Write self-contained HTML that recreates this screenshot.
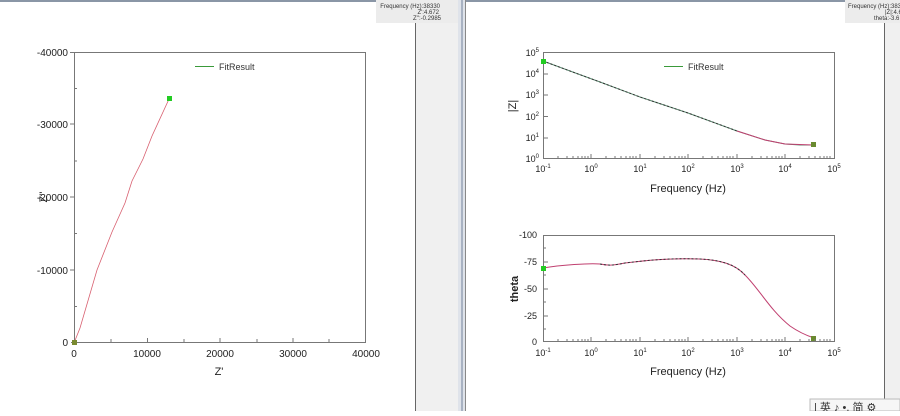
<!DOCTYPE html>
<html><head><meta charset="utf-8"><style>
body{margin:0;width:900px;height:411px;overflow:hidden;background:#fff;font-family:"Liberation Sans",sans-serif;}
</style></head><body>
<svg width="900" height="411" xmlns="http://www.w3.org/2000/svg" font-family="Liberation Sans, sans-serif">
<rect width="900" height="411" fill="#fff"/>
<rect x="0" y="0" width="900" height="2" fill="#8a96a6"/>
<rect x="415" y="2" width="43" height="409" fill="#f0f0f0"/>
<line x1="415.5" y1="2" x2="415.5" y2="411" stroke="#666"/>
<rect x="458" y="0" width="8" height="411" fill="#dfe3ea"/>
<rect x="461" y="0" width="2" height="411" fill="#a8b2c2"/>
<line x1="465.5" y1="0" x2="465.5" y2="411" stroke="#888"/>
<rect x="884" y="2" width="16" height="409" fill="#f0f0f0"/>
<line x1="884.5" y1="2" x2="884.5" y2="411" stroke="#666"/>
<rect x="376" y="0" width="82" height="23" fill="#ececec"/>
<g font-size="6" fill="#333" text-anchor="end">
<text x="440" y="8">Frequency (Hz):38330</text>
<text x="439" y="14">Z':4.672</text>
<text x="441" y="20">Z'':-0.2985</text>
</g>
<rect x="845" y="0" width="55" height="23" fill="#ececec"/>
<g font-size="6" fill="#333" text-anchor="start">
<text x="848" y="8">Frequency (Hz):3833</text>
<text x="885" y="14">|Z|:4.6</text>
<text x="874" y="20">theta:-3.6</text>
</g>

<rect x="74.5" y="52.5" width="291" height="290" fill="none" stroke="#777"/>
<g stroke="#777">
<line x1="74" y1="342.5" x2="71" y2="342.5"/><line x1="74" y1="306.5" x2="77" y2="306.5"/>
<line x1="70" y1="270" x2="74" y2="270"/><line x1="74" y1="233.5" x2="77" y2="233.5"/>
<line x1="70" y1="197" x2="74" y2="197"/><line x1="74" y1="161" x2="77" y2="161"/>
<line x1="70" y1="124" x2="74" y2="124"/><line x1="74" y1="88.5" x2="77" y2="88.5"/>
<line x1="70" y1="52.5" x2="74" y2="52.5"/>
<line x1="111" y1="342" x2="111" y2="339"/><line x1="147.5" y1="342" x2="147.5" y2="338"/>
<line x1="184" y1="342" x2="184" y2="339"/><line x1="220" y1="342" x2="220" y2="338"/>
<line x1="257" y1="342" x2="257" y2="339"/><line x1="293" y1="342" x2="293" y2="338"/>
<line x1="329" y1="342" x2="329" y2="339"/>
</g>
<g font-size="10" fill="#222" text-anchor="end">
<text x="68" y="56">-40000</text><text x="68" y="128">-30000</text><text x="68" y="201">-20000</text>
<text x="68" y="274">-10000</text><text x="68" y="346">0</text>
</g>
<g font-size="10" fill="#222" text-anchor="middle">
<text x="74" y="357">0</text><text x="147" y="357">10000</text><text x="220" y="357">20000</text>
<text x="293" y="357">30000</text><text x="366" y="357">40000</text>
<text x="219" y="375" font-size="11">Z'</text>
</g>
<text x="47" y="197" font-size="11" fill="#222" text-anchor="middle" transform="rotate(-90 47 197)">Z''</text>
<line x1="195" y1="66.5" x2="214" y2="66.5" stroke="#3a9a3a"/>
<text x="219" y="70" font-size="9" fill="#333">FitResult</text>
<polyline points="74,343 80,328 97,270 112,232 125,203 132,181 143,159 152,136 169,99" fill="none" stroke="#d86070" stroke-width="0.8"/>
<rect x="167" y="96" width="5" height="5" fill="#22cc22"/>
<rect x="72" y="340" width="5" height="5" fill="#7a8a30"/>

<rect x="543.5" y="52.5" width="291" height="106" fill="none" stroke="#777"/>
<g stroke="#777">
<line x1="543" y1="52.5" x2="548" y2="52.5"/><line x1="543" y1="74" x2="548" y2="74"/>
<line x1="543" y1="95" x2="548" y2="95"/><line x1="543" y1="116.5" x2="548" y2="116.5"/>
<line x1="543" y1="138" x2="548" y2="138"/>
</g>
<g font-size="9" fill="#222" text-anchor="end">
<text x="539" y="56">10<tspan font-size="6" dy="-4">5</tspan></text>
<text x="539" y="77">10<tspan font-size="6" dy="-4">4</tspan></text>
<text x="539" y="98">10<tspan font-size="6" dy="-4">3</tspan></text>
<text x="539" y="120">10<tspan font-size="6" dy="-4">2</tspan></text>
<text x="539" y="141">10<tspan font-size="6" dy="-4">1</tspan></text>
<text x="539" y="162">10<tspan font-size="6" dy="-4">0</tspan></text>
</g>
<g font-size="9" fill="#222" text-anchor="middle">
<text x="543" y="172">10<tspan font-size="6" dy="-4">-1</tspan></text>
<text x="591" y="172">10<tspan font-size="6" dy="-4">0</tspan></text>
<text x="640" y="172">10<tspan font-size="6" dy="-4">1</tspan></text>
<text x="688" y="172">10<tspan font-size="6" dy="-4">2</tspan></text>
<text x="737" y="172">10<tspan font-size="6" dy="-4">3</tspan></text>
<text x="785" y="172">10<tspan font-size="6" dy="-4">4</tspan></text>
<text x="834" y="172">10<tspan font-size="6" dy="-4">5</tspan></text>
</g>
<text x="688" y="192" font-size="11" fill="#222" text-anchor="middle">Frequency (Hz)</text>
<text x="516" y="106" font-size="11" fill="#222" text-anchor="middle" transform="rotate(-90 516 106)">|Z|</text>
<line x1="664" y1="66.5" x2="683" y2="66.5" stroke="#3a9a3a"/>
<text x="688" y="70" font-size="9" fill="#333">FitResult</text>
<polyline points="543,61 570,71 600,82 640,97 688,113 737,131 765,140 785,144 800,145 814,145" fill="none" stroke="#5a8a70" stroke-width="1"/>
<polyline points="543,61 570,71 600,82 640,97 688,113 737,131" fill="none" stroke="#333" stroke-width="1" stroke-dasharray="2,2"/>
<polyline points="737,131 765,140 785,144 814,145" fill="none" stroke="#c04070" stroke-width="1"/>
<rect x="541" y="59" width="5" height="5" fill="#22cc22"/>
<rect x="811" y="142" width="5" height="5" fill="#6a8a30"/>

<rect x="543.5" y="235.5" width="291" height="106" fill="none" stroke="#777"/>
<g font-size="9" fill="#222" text-anchor="end">
<text x="537" y="238">-100</text><text x="537" y="265">-75</text><text x="537" y="292">-50</text>
<text x="537" y="319">-25</text><text x="537" y="345">0</text>
</g>
<g font-size="9" fill="#222" text-anchor="middle">
<text x="543" y="356">10<tspan font-size="6" dy="-4">-1</tspan></text>
<text x="591" y="356">10<tspan font-size="6" dy="-4">0</tspan></text>
<text x="640" y="356">10<tspan font-size="6" dy="-4">1</tspan></text>
<text x="688" y="356">10<tspan font-size="6" dy="-4">2</tspan></text>
<text x="737" y="356">10<tspan font-size="6" dy="-4">3</tspan></text>
<text x="785" y="356">10<tspan font-size="6" dy="-4">4</tspan></text>
<text x="834" y="356">10<tspan font-size="6" dy="-4">5</tspan></text>
</g>
<text x="688" y="375" font-size="11" fill="#222" text-anchor="middle">Frequency (Hz)</text>
<text x="518" y="289" font-size="11" fill="#222" font-weight="bold" text-anchor="middle" transform="rotate(-90 518 289)">theta</text>
<path d="M543,268 C560,265 590,263 600,264 C610,266 615,265 625,263 C650,260 670,258 700,259 C720,260 735,264 745,275 C760,290 770,310 790,326 C800,333 808,336 814,338" fill="none" stroke="#c04070" stroke-width="1"/>
<path d="M600,264 C610,266 615,265 625,263 C650,260 670,258 700,259 C720,260 735,264 745,275" fill="none" stroke="#333" stroke-width="1" stroke-dasharray="2,2"/>
<rect x="541" y="266" width="5" height="5" fill="#22cc22"/>
<rect x="811" y="336" width="5" height="5" fill="#6a8a30"/>
<g stroke="#777">
<path d="M558,159v-3M567,159v-3M573,159v-3M578,159v-3M582,159v-3M585,159v-3M588,159v-3M591,159v-5M606,159v-3M615,159v-3M621,159v-3M626,159v-3M630,159v-3M633,159v-3M636,159v-3M640,159v-5M655,159v-3M664,159v-3M670,159v-3M675,159v-3M679,159v-3M682,159v-3M685,159v-3M688,159v-5M703,159v-3M712,159v-3M718,159v-3M723,159v-3M727,159v-3M730,159v-3M733,159v-3M737,159v-5M752,159v-3M761,159v-3M767,159v-3M772,159v-3M776,159v-3M779,159v-3M782,159v-3M785,159v-5M800,159v-3M809,159v-3M815,159v-3M820,159v-3M824,159v-3M827,159v-3M830,159v-3"/>
<path d="M558,342v-3M567,342v-3M573,342v-3M578,342v-3M582,342v-3M585,342v-3M588,342v-3M591,342v-5M606,342v-3M615,342v-3M621,342v-3M626,342v-3M630,342v-3M633,342v-3M636,342v-3M640,342v-5M655,342v-3M664,342v-3M670,342v-3M675,342v-3M679,342v-3M682,342v-3M685,342v-3M688,342v-5M703,342v-3M712,342v-3M718,342v-3M723,342v-3M727,342v-3M730,342v-3M733,342v-3M737,342v-5M752,342v-3M761,342v-3M767,342v-3M772,342v-3M776,342v-3M779,342v-3M782,342v-3M785,342v-5M800,342v-3M809,342v-3M815,342v-3M820,342v-3M824,342v-3M827,342v-3M830,342v-3"/>
<path d="M543,248h3M543,262h5M543,275h3M543,289h5M543,302h3M543,316h5M543,329h3"/>
</g>
<rect x="810" y="399" width="90" height="12" fill="#f6f6f6" stroke="#bbb"/>
<text x="814" y="411" font-size="11" fill="#333" font-family="Liberation Sans, Noto Sans CJK SC, sans-serif">| 英 ♪ •, 简 ⚙</text>
</svg>
</body></html>
